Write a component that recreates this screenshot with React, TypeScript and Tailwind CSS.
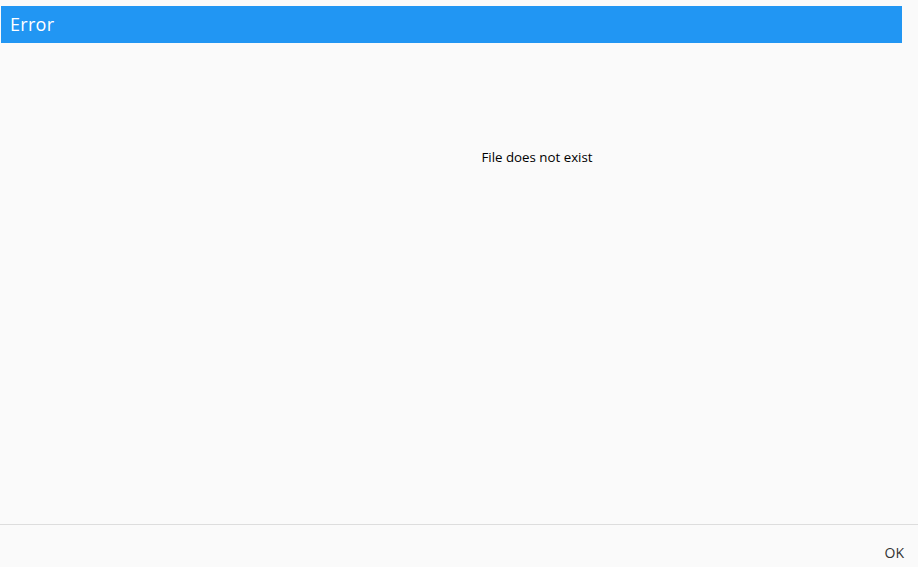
export default function App() {
  return (
    <div className="flex h-[567px] w-[918px] flex-col bg-[#fafafa] font-['Open_Sans','Noto_Sans',sans-serif]">
      <div className="ml-[1px] mt-[6px] flex h-[37px] w-[901px] items-center bg-[#2196f3] pl-[9px]">
        <span className="text-[18px] tracking-[0.3px] text-white">Error</span>
      </div>
      <div className="flex-1 pl-[156px] pt-[101px] text-center">
        <span className="text-[13.3px] text-black">File does not exist</span>
      </div>
      <div className="flex h-[43px] items-center justify-end border-t border-[#dddddd] pr-[14px] pt-[12px]">
        <span className="text-[14px] text-[#333]">OK</span>
      </div>
    </div>
  )
}
